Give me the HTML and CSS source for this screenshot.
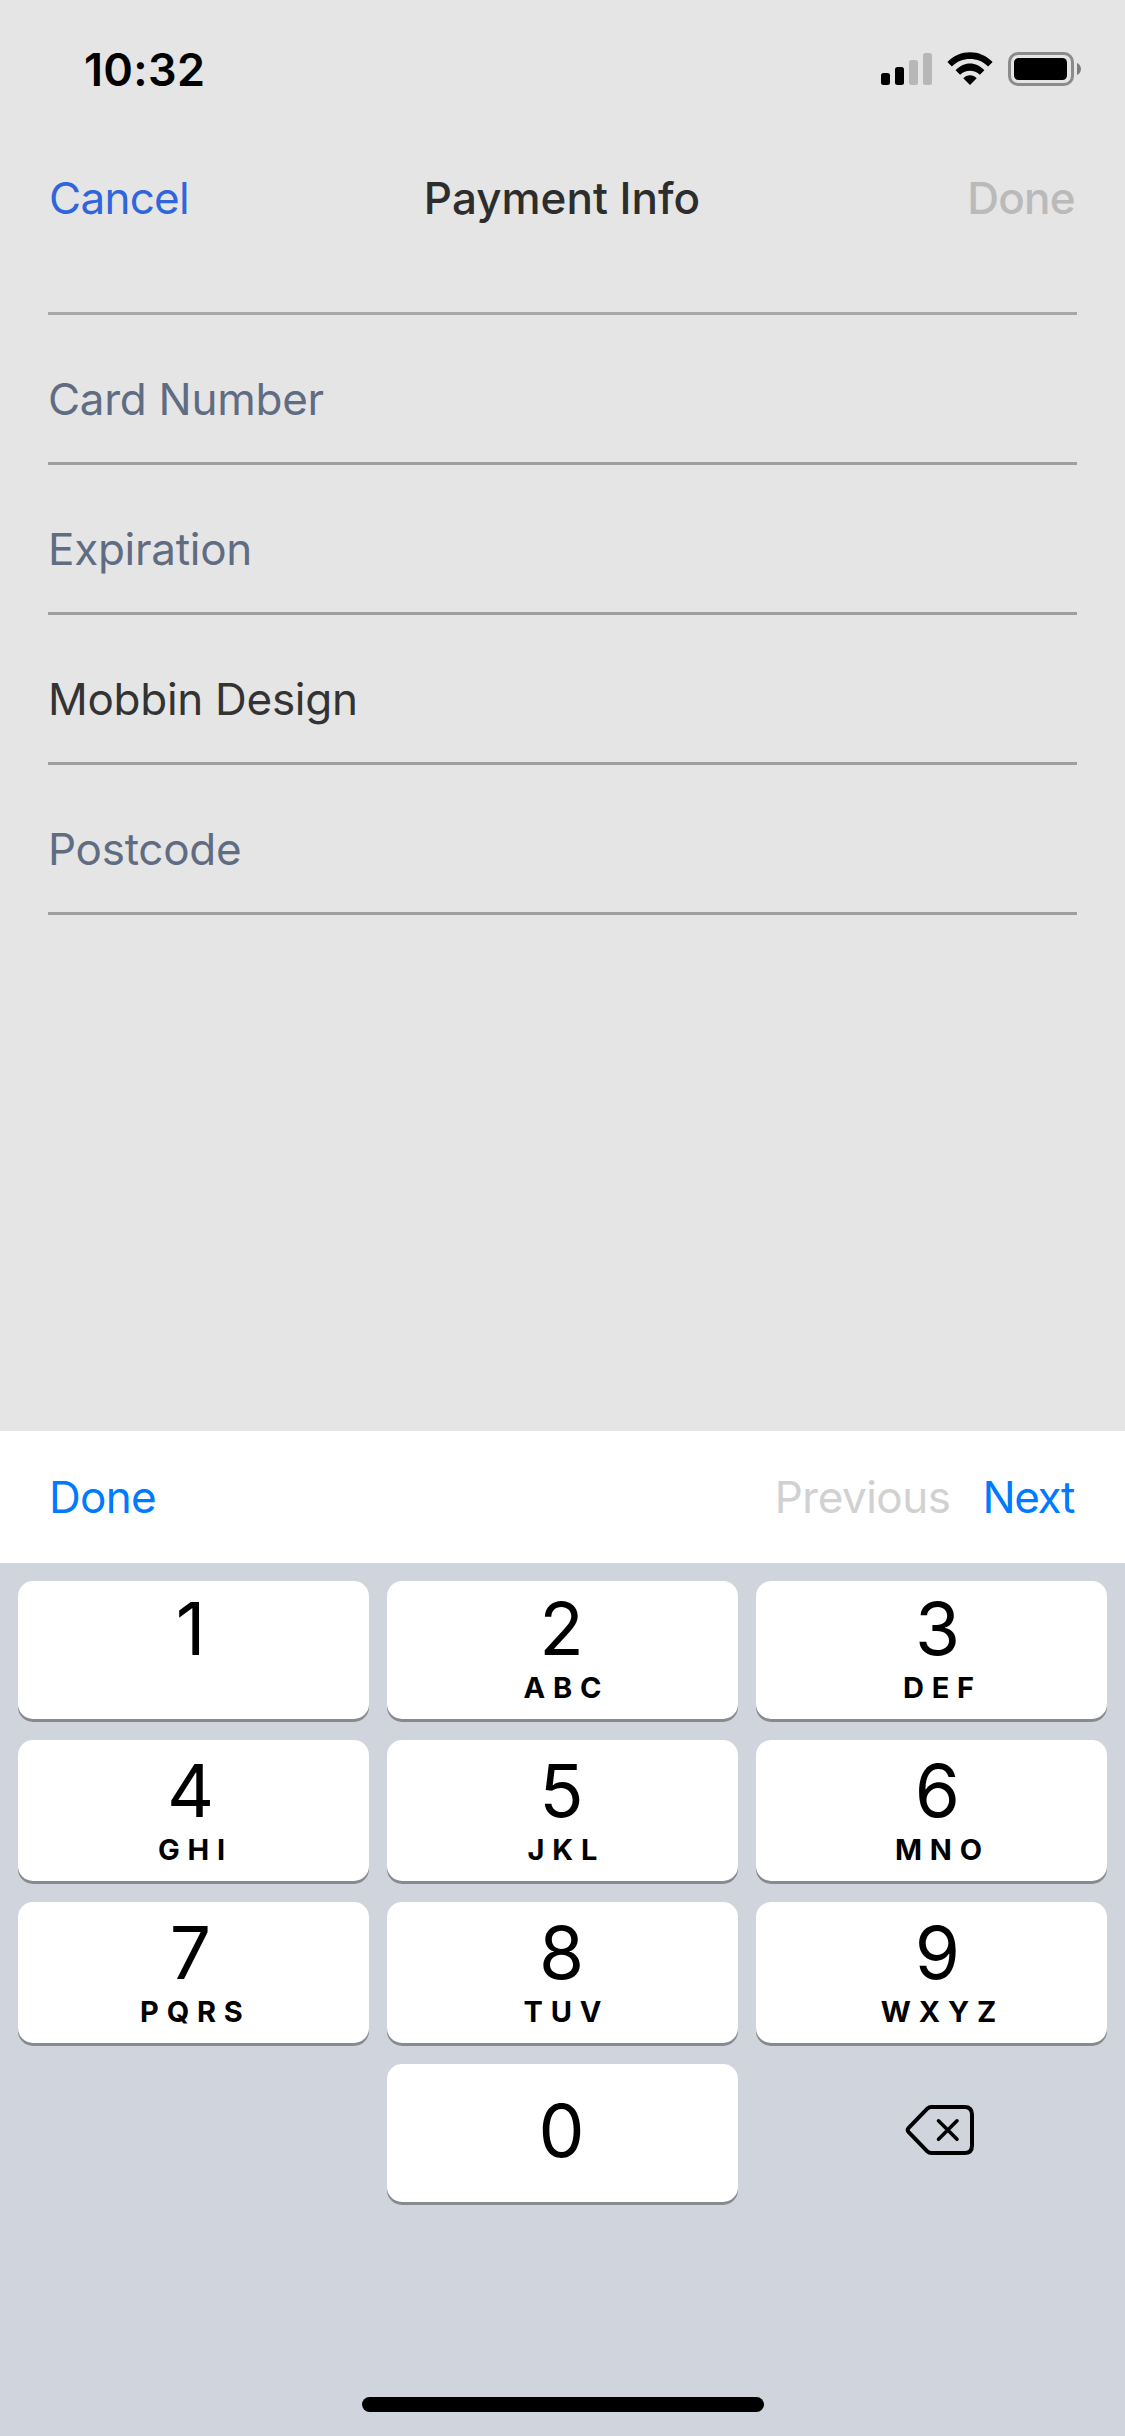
FILE: index.html
```
<!DOCTYPE html>
<html lang="en">
<head>
<meta charset="utf-8">
<title>Payment Info</title>
<link rel="stylesheet" href="styles.css">
</head>
<body>
<div class="screen">
  <header class="status-bar">
    <span class="time">10:32</span>
    <svg class="status-icons" width="202" height="36" viewBox="880 51 202 36" aria-hidden="true">
      <rect x="881" y="73" width="9" height="12" rx="2.5"/>
      <rect x="895" y="67" width="9" height="18" rx="2.5"/>
      <rect class="bar-off" x="909" y="60" width="9" height="25" rx="2.5"/>
      <rect class="bar-off" x="923" y="53" width="9" height="32" rx="2.5"/>
      <path d="M947.4 61.9C960 49 980 49 992.6 61.9L988.1 66.4C978.200 56.600 961.800 56.600 951.900 66.400Z"/>
      <path d="M955.6 70.3C963.5 61.100 976.5 61.100 984.4 70.300L979.900 74.800C974.500 69.300 965.500 69.300 960.100 74.800Z"/>
      <path d="M963.3 78.300C966.500 74.200 973.500 74.200 976.700 78.300L970 85Z"/>
      <rect class="battery-case" x="1009.500" y="53.500" width="63" height="31" rx="8.500"/>
      <rect x="1014" y="58" width="53" height="22" rx="4.500"/>
      <path class="battery-tip" d="M1077 63C1082.300 65 1082.300 73 1077 75Z"/>
    </svg>
  </header>

  <nav class="nav-bar">
    <span class="nav-cancel">Cancel</span>
    <span class="nav-title">Payment Info</span>
    <span class="nav-done">Done</span>
  </nav>

  <main class="form">
    <div class="field field-empty"></div>
    <div class="field card-number">Card Number</div>
    <div class="field">Expiration</div>
    <div class="field filled">Mobbin Design</div>
    <div class="field">Postcode</div>
  </main>

  <div class="toolbar">
    <span class="tool-done">Done</span>
    <span class="tool-previous">Previous</span>
    <span class="tool-next">Next</span>
  </div>

  <section class="keyboard">
    <div class="key-row">
      <div class="key"><span class="digit">1</span></div>
      <div class="key"><span class="digit">2</span><span class="letters">ABC</span></div>
      <div class="key"><span class="digit">3</span><span class="letters">DEF</span></div>
    </div>
    <div class="key-row tall">
      <div class="key"><span class="digit">4</span><span class="letters">GHI</span></div>
      <div class="key"><span class="digit">5</span><span class="letters">JKL</span></div>
      <div class="key"><span class="digit">6</span><span class="letters">MNO</span></div>
    </div>
    <div class="key-row tall">
      <div class="key"><span class="digit">7</span><span class="letters">PQRS</span></div>
      <div class="key"><span class="digit">8</span><span class="letters">TUV</span></div>
      <div class="key"><span class="digit">9</span><span class="letters">WXYZ</span></div>
    </div>
    <div class="key-row">
      <div class="key blank"></div>
      <div class="key zero"><span class="digit">0</span></div>
      <div class="key blank delete">
        <svg width="70" height="52" viewBox="0 0 70 52" fill="none" stroke="#000" stroke-width="4" stroke-linejoin="round" stroke-linecap="round" aria-label="Delete">
          <path d="M26.500 3H59.500Q67 3 67 10.500V41.500Q67 49 59.500 49H26.500Q24 49 22.300 47.300L3.700 28.200Q1.700 26 3.700 23.800L22.300 4.700Q24 3 26.500 3Z"/>
          <path stroke-width="3.600" d="M33.500 16.800L52 35.300M52 16.800L33.500 35.300"/>
        </svg>
      </div>
    </div>
    <div class="home-indicator"></div>
  </section>
</div>
</body>
</html>
```
FILE: styles.css
```
* { box-sizing: border-box; }

body {
  margin: 0;
  font-family: Inter, "Liberation Sans", sans-serif;
  font-size: 44px;
}

.screen {
  width: 1125px;
  height: 2436px;
  display: flex;
  flex-direction: column;
  background: #e5e5e5;
}

.status-bar {
  height: 138px;
  padding: 0 43px 0 84px;
  display: flex;
  align-items: center;
  justify-content: space-between;
}

.time {
  font-size: 45px;
  font-weight: 600;
  letter-spacing: 0.3px;
}

.status-icons { display: block; }
.bar-off { fill: #b7b7b7; }
.battery-case { fill: none; stroke: #8b8b8b; stroke-width: 3; }
.battery-tip { fill: #7d7d7d; }

.nav-bar {
  height: 120px;
  padding: 0 50px 0 49px;
  display: grid;
  grid-template-columns: 1fr auto 1fr;
  align-items: center;
}

.nav-cancel { color: #2f66dc; letter-spacing: -0.73px; }
.nav-title { color: #2d2d2d; font-weight: 500; }
.nav-done {
  color: #bababa;
  font-weight: 500;
  letter-spacing: -0.7px;
  text-align: right;
}

.form {
  flex: 1;
  padding: 0 48px;
}

.field {
  height: 150px;
  padding-top: 21px;
  border-bottom: 3px solid #9f9f9f;
  line-height: 126px;
  letter-spacing: -0.28px;
  color: #5f6c82;
}

.field-empty {
  height: 57px;
  border-color: #a8a8a8;
}

.filled { color: #333; }

.toolbar {
  height: 132px;
  padding: 0 51px 0 49px;
  display: flex;
  align-items: center;
  background: #fff;
}

.tool-done {
  margin-right: auto;
  color: #007aff;
  letter-spacing: -0.7px;
}

.tool-previous {
  margin-right: 32px;
  color: #d1d1d1;
  letter-spacing: -0.5px;
}

.tool-next { color: #007aff; letter-spacing: -1.4px; }

.keyboard {
  height: 873px;
  padding: 18px 18px 24px;
  display: flex;
  flex-direction: column;
  gap: 21px;
  background: #d0d4dc;
}

.key-row {
  height: 138px;
  display: grid;
  grid-template-columns: repeat(3, 1fr);
  gap: 18px;
}

.key-row.tall { height: 141px; }
.tall .key { padding-top: 3px; }

.key {
  display: flex;
  flex-direction: column;
  align-items: center;
  border-radius: 15px;
  background: #fff;
  box-shadow: 0 3px 0 #898a8d;
}

.key:first-child { padding-right: 4px; }
.key:last-child { padding-left: 14px; }

.digit {
  margin-right: 2px;
  font-size: 73px;
  line-height: 95px;
}

.letters {
  font-size: 29px;
  font-weight: 650;
  line-height: 23px;
  letter-spacing: 7.8px;
  margin-right: -7.8px;
}

.zero .digit { line-height: 133px; }

.blank {
  background: none;
  box-shadow: none;
}

.delete {
  justify-content: center;
  padding-bottom: 6px;
}

.key.delete { padding-left: 16px; }

.home-indicator {
  width: 402px;
  height: 15px;
  margin: auto auto 0;
  border-radius: 8px;
  background: #000;
}
```
